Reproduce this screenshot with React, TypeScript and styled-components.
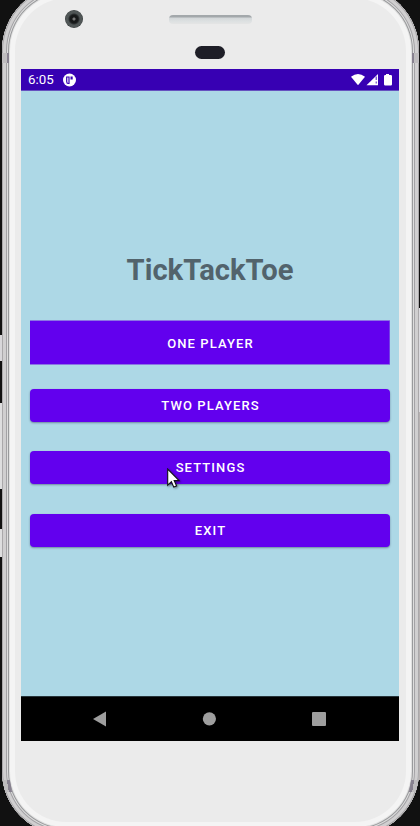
import React from 'react';
import styled, { createGlobalStyle } from 'styled-components';

const GlobalStyle = createGlobalStyle`
  * { box-sizing: border-box; }
  body { margin: 0; background: #111; font-family: Roboto, "Liberation Sans", sans-serif; overflow: hidden; }
`;

const Stage = styled.div`
  position: relative;
  display: flex;
  align-items: flex-start;
  width: 420px;
  height: 826px;
  overflow: hidden;
  background: #111;
`;

const Rail = styled.div`
  display: grid;
  height: 826px;
`;

const LeftRail = styled(Rail)`
  flex: 0 0 2px;
  grid-template-rows: 335px 26px 42px 86px 40px 28px 1fr;
`;

const RightRail = styled(Rail)`
  flex: 0 0 1px;
  grid-template-rows: 308px 104px 368px 1fr;
`;

const Segment = styled.div<{ $tone?: string }>`
  background: ${p => p.$tone ?? 'transparent'};
`;

const Phone = styled.div`
  position: relative;
  display: flex;
  flex-direction: column;
  flex: 0 0 417px;
  height: 850px;
  margin-top: -15px;
  padding: 15px 20px 0 19px;
  border-radius: 66px 66px 64px 64px;
  overflow: hidden;
  background: #ebebeb;
  box-shadow:
    inset 0 0 0 1px #aaa8aa,
    inset 0 0 0 4px #d0cfd0,
    inset 0 0 0 5px #a3a2a5,
    inset 0 0 0 6px #dedede,
    inset 0 0 0 7px #999a9c,
    inset 0 0 0 8px #e0e0e0,
    inset 0 0 0 13px #f4f4f4;
`;

/* Plastic band that lies over the metal frame near each corner. */
const Antenna = styled.div<{ $side: 'left' | 'right'; $low?: boolean }>`
  position: absolute;
  ${p => p.$side}: 0;
  ${p => (p.$low ? 'bottom: 43px' : 'top: 68px')};
  width: ${p => (p.$low ? 9 : 7)}px;
  height: ${p => (p.$low ? 12 : 10)}px;
  background: linear-gradient(to ${p => (p.$side === 'left' ? 'right' : 'left')}, #bebcbe 0 65%, #87818f 65%);
  transform: ${p => (p.$low ? `skewX(${p.$side === 'left' ? 10 : -10}deg)` : 'none')};
`;

const Bezel = styled.div`
  display: grid;
  grid-template-columns: 1fr auto 1fr;
  flex: 0 0 69px;
  padding-top: 10px;
`;

const Camera = styled.div`
  width: 18px;
  height: 18px;
  margin-left: 44px;
  border-radius: 50%;
  background: radial-gradient(circle at 50% 50%, #777 0 1px, #171919 2px 4px, #2e3233 5px, #505656 6px 8px, #303536 9px);
`;

const Earpiece = styled.div`
  display: flex;
  flex-direction: column;
  align-items: center;
  gap: 22px;
  padding-top: 5px;
`;

const Speaker = styled.div`
  width: 83px;
  height: 9px;
  border-radius: 4px;
  background: linear-gradient(#a3a8ab 0 2px, #d3d7d9 3px, #dce0e1 6px, #e4e5e5);
`;

const Sensor = styled.div`
  width: 30px;
  height: 13px;
  border-radius: 7px;
  background: #1e1e27;
`;

const Screen = styled.div`
  display: flex;
  flex-direction: column;
  flex: 0 0 672px;
  background: #add8e6;
`;

const StatusBar = styled.header`
  display: flex;
  align-items: center;
  height: 22px;
  padding: 0 6px 0 7px;
  background: #3700b3;
  border-bottom: 1px solid #6651c0;
  color: #fff;
`;

const Clock = styled.span`
  width: 35px;
  font-size: 13.3px;
  line-height: 21px;
`;

const StatusIcons = styled.svg`
  display: block;
  margin-left: auto;
`;

const Content = styled.main`
  flex: 1;
  display: flex;
  flex-direction: column;
  padding: 161px 9px 0;
`;

const Title = styled.h1`
  margin: 0 0 32px;
  line-height: 36px;
  font-size: 29.2px;
  font-weight: 700;
  text-align: center;
  color: #52636c;
`;

const Menu = styled.div`
  display: grid;
  grid-template-rows: 45px 24px 33px 29px 33px 30px 33px;
`;

const MenuButton = styled.button<{ $row: number; $square?: boolean }>`
  grid-row: ${p => p.$row};
  padding: ${p => (p.$square ? '2px 0 0 1px' : '0 0 0 1px')};
  border: 0;
  border-radius: ${p => (p.$square ? 0 : 4)}px;
  background: #6200ee;
  box-shadow: ${p => p.$square
    ? 'inset 0 1px #8b75e2, inset 0 -1px #8b75e2, inset -1px 0 #7440e6'
    : '0 1px 2px rgba(30, 40, 70, 0.45)'};
  color: #fff;
  font: 500 13px/1 Roboto, "Liberation Sans", sans-serif;
  letter-spacing: 1.1px;
`;

const NavBar = styled.nav`
  display: flex;
  justify-content: space-between;
  align-items: center;
  height: 45px;
  padding: 0 73px 0 72px;
  border-top: 1px solid #27343a;
  background: #000;
  svg { display: block; fill: #9e9e9e; }
`;

const Pointer = styled.svg`
  position: absolute;
  left: 167px;
  top: 468px;
  filter: drop-shadow(1px 1px 1px rgba(0, 0, 0, 0.4));
`;

export default function App() {
  return (
    <Stage>
      <GlobalStyle />
      <LeftRail>
        <Segment />
        <Segment $tone="#d8d7da" />
        <Segment />
        <Segment $tone="#dededf" />
        <Segment />
        <Segment $tone="#dededf" />
        <Segment />
      </LeftRail>
      <Phone>
        <Bezel>
          <Camera />
          <Earpiece>
            <Speaker />
            <Sensor />
          </Earpiece>
        </Bezel>
        <Screen>
          <StatusBar>
            <Clock>6:05</Clock>
            <svg width="13" height="14" viewBox="0 0 13 14">
              <circle cx="6.5" cy="7" r="6.5" fill="#fff" />
              <path d="M6 4H3.7v4.6c0 1.1.5 1.9 1.4 1.9H6Z" fill="none" stroke="#3700b3" strokeWidth="1.2" />
              <path d="M7.5 3.5h2.2v3H7.5z" fill="#3700b3" />
            </svg>
            <StatusIcons width="42" height="14" viewBox="0 0 42 14" fill="#fff">
              <path d="M0 3.8Q7-1.6 14 3.8L7 12.3Z" />
              <path d="M27 1v11.3H15.5Z" />
              <path d="M25.2 3.5V7M25.2 8.5v2" stroke="#3700b3" strokeWidth="0.9" />
              <path d="M35 1h3v1h1.8q1.2 0 1.2 1.2v8q0 1.3-1.2 1.3h-5.6q-1.2 0-1.2-1.3v-8q0-1.2 1.2-1.2h.8z" />
            </StatusIcons>
          </StatusBar>
          <Content>
            <Title>TickTackToe</Title>
            <Menu>
              <MenuButton $row={1} $square>ONE PLAYER</MenuButton>
              <MenuButton $row={3}>TWO PLAYERS</MenuButton>
              <MenuButton $row={5}>SETTINGS</MenuButton>
              <MenuButton $row={7}>EXIT</MenuButton>
            </Menu>
          </Content>
          <NavBar>
            <svg width="13" height="16" viewBox="0 0 13 16"><path d="M0 8 13 .5v15Z" /></svg>
            <svg width="14" height="14" viewBox="0 0 14 14"><circle cx="7.4" cy="6.8" r="6.6" /></svg>
            <svg width="14" height="14" viewBox="0 0 14 14"><rect width="14" height="14" rx="1" /></svg>
          </NavBar>
        </Screen>
        <Antenna $side="left" />
        <Antenna $side="right" />
        <Antenna $side="left" $low />
        <Antenna $side="right" $low />
      </Phone>
      <RightRail>
        <Segment />
        <Segment $tone="#dcdbdf" />
        <Segment $tone="#b7b2b2" />
        <Segment />
      </RightRail>
      <Pointer width="14" height="21" viewBox="0 0 14 21">
        <path d="M.7 1v16.2l3.7-3.5 2.4 5.4 2.8-1.2-2.4-5.3h4.9Z" fill="#fff" stroke="#101014" strokeWidth="1.1" />
      </Pointer>
    </Stage>
  );
}
